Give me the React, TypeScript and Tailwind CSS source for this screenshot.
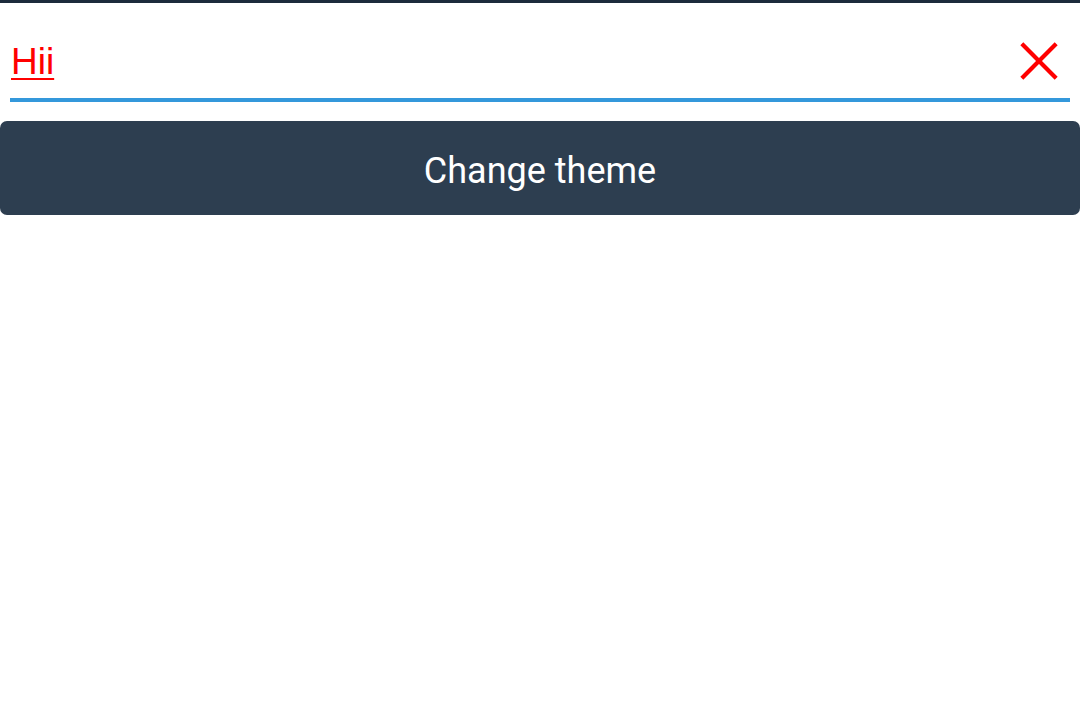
export default function App() {
  return (
    <div className="min-h-[710px] w-[1080px] bg-white">
      <div className="h-[3px] bg-[#1c2b3c]" />
      <div className="px-[10px]">
        <div className="flex h-[99px] items-start justify-between border-b-4 border-[#3498db]">
          <span
            className="mt-[40px] pl-[1px] text-[37px] leading-none text-[#ff0000] underline decoration-2 underline-offset-[4px]"
            style={{ fontFamily: '"Liberation Sans", Arial, sans-serif' }}
          >
            Hii
          </span>
          <svg
            viewBox="0 0 44 44"
            className="mr-[10px] mt-[37px] h-[42px] w-[42px]"
            fill="none"
            stroke="#ff0000"
            strokeWidth={4.4}
          >
            <path d="M4 4L40 40M40 4L4 40" />
          </svg>
        </div>
      </div>
      <button
        type="button"
        className="mt-[19px] flex h-[94px] w-full items-center justify-center rounded-[7px] bg-[#2d3e50] pt-[5px] text-[36px] text-white"
        style={{ fontFamily: "Roboto, sans-serif" }}
      >
        Change theme
      </button>
    </div>
  );
}
